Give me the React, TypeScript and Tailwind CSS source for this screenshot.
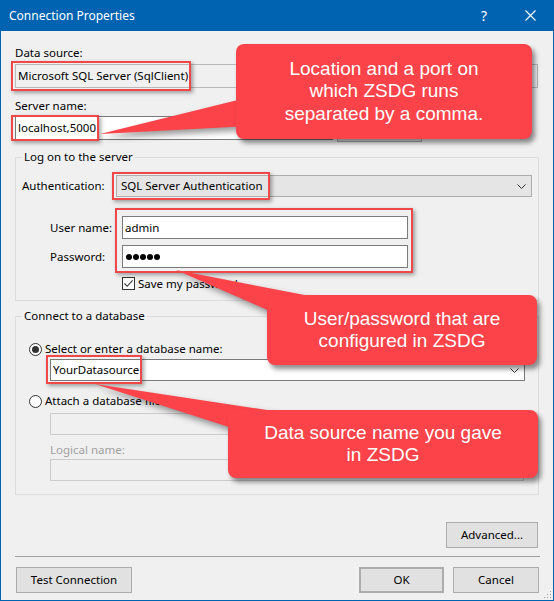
import React from 'react';

function Chevron() {
  return (
    <svg width="9" height="5" viewBox="0 0 9 5" className="shrink-0">
      <path d="M0.5 0.5 L4.5 4.5 L8.5 0.5" fill="none" stroke="#333" strokeWidth="1" />
    </svg>
  );
}

function Radio({ checked }: { checked?: boolean }) {
  return (
    <span className="w-[13px] h-[13px] rounded-full border border-[#333] bg-white flex items-center justify-center shrink-0">
      {checked && <span className="w-[7px] h-[7px] rounded-full bg-[#333]" />}
    </span>
  );
}

function Button({ children, className = '' }: { children?: React.ReactNode; className?: string }) {
  return (
    <div className={`h-[26px] flex items-center justify-center bg-[#e1e1e1] border border-[#adadad] ${className}`}>
      {children}
    </div>
  );
}

function Callout({ className, lines }: { className: string; lines: string[] }) {
  return (
    <div
      className={`absolute rounded-[8px] bg-[#fc4349] shadow-[3px_4px_5px_rgba(0,0,0,0.45)] flex flex-col items-center justify-center text-white text-[19px] leading-[22.5px] font-['Liberation_Sans',Arial,sans-serif] ${className}`}
    >
      {lines.map((l) => (
        <div key={l}>{l}</div>
      ))}
    </div>
  );
}

export default function App() {
  return (
    <div className="relative w-[554px] h-[601px] overflow-hidden bg-[#f0f0f0] border-x border-b border-[#0063b1] font-['Noto_Sans',sans-serif] text-[11.5px] leading-[16px] text-black">
      {/* title bar */}
      <div className="h-[31px] bg-[#0063b1] flex items-center text-white pl-[8px]">
        <span className="text-[12px]">Connection Properties</span>
        <div className="ml-auto flex h-full">
          <div className="w-[46px] flex items-center justify-center text-[14px]">?</div>
          <div className="w-[46px] flex items-center justify-center">
            <svg width="11" height="11" viewBox="0 0 11 11">
              <path d="M0.5 0.5 L10.5 10.5 M10.5 0.5 L0.5 10.5" stroke="white" strokeWidth="1.1" />
            </svg>
          </div>
        </div>
      </div>

      <div className="px-[14px] pt-[14px]">
        <div className="h-[16px]">Data source:</div>
        <div className="mt-[3px] h-[24px] border border-[#b9b9b9] flex items-center pl-[2px] mr-[1px]">
          Microsoft SQL Server (SqlClient)
        </div>

        <div className="mt-[10px] h-[16px]">Server name:</div>
        <div className="mt-[2px] flex h-[24px]">
          <div className="w-[318px] border border-[#7a7a7a] bg-white flex items-center pl-[2px]">localhost,5000</div>
          {/* refresh button, hidden under the callout */}
          <Button className="ml-[4px] w-[85px] h-[24px]" />
        </div>

        <fieldset className="mt-[10px] border border-[#dcdcdc] px-[6px] pb-[10px]">
          <legend className="px-[2px] leading-[14px]">Log on to the server</legend>
          <div className="mt-[11px] flex items-center h-[22px]">
            <div className="w-[94px]">Authentication:</div>
            <div className="flex-1 h-full border border-[#adadad] bg-[#e5e5e5] flex items-center pl-[4px] pr-[5px]">
              <span className="flex-1">SQL Server Authentication</span>
              <Chevron />
            </div>
          </div>
          <div className="mt-[19px] flex items-center h-[23px] pl-[28px]">
            <div className="w-[72px]">User name:</div>
            <div className="w-[286px] h-full border border-[#7a7a7a] bg-white flex items-center pl-[2px]">admin</div>
          </div>
          <div className="mt-[6px] flex items-center h-[23px] pl-[28px]">
            <div className="w-[72px]">Password:</div>
            <div className="w-[286px] h-full border border-[#7a7a7a] bg-white flex items-center gap-[1px] pl-[3px]">
              <span className="w-[6px] h-[6px] rounded-full bg-black" />
              <span className="w-[6px] h-[6px] rounded-full bg-black" />
              <span className="w-[6px] h-[6px] rounded-full bg-black" />
              <span className="w-[6px] h-[6px] rounded-full bg-black" />
              <span className="w-[6px] h-[6px] rounded-full bg-black" />
            </div>
          </div>
          <div className="mt-[9px] flex items-center h-[13px] pl-[100px]">
            <span className="w-[13px] h-[13px] border border-[#333] bg-white flex items-center justify-center">
              <svg width="11" height="11" viewBox="0 0 11 11">
                <path d="M1.5 5.5 L4.2 8.3 L9.6 2.4" fill="none" stroke="#333" strokeWidth="1.1" />
              </svg>
            </span>
            <span className="ml-[3px]">Save my password</span>
          </div>
        </fieldset>

        <fieldset className="mt-[8px] border border-[#dcdcdc] px-[6px] pb-[13px]">
          <legend className="px-[2px] leading-[14px]">Connect to a database</legend>
          <div className="mt-[18px] flex items-center h-[16px] pl-[7px]">
            <Radio checked />
            <span className="ml-[3px]">Select or enter a database name:</span>
          </div>
          <div className="mt-[2px] ml-[28px] w-[475px] h-[22px] border border-[#7a7a7a] bg-white flex items-center pl-[2px] pr-[5px]">
            <span className="flex-1">YourDatasource</span>
            <Chevron />
          </div>
          <div className="mt-[12px] flex items-center h-[16px] pl-[7px]">
            <Radio />
            <span className="ml-[3px]">Attach a database file:</span>
          </div>
          <div className="mt-[4px] ml-[28px] w-[474px] h-[22px] border border-[#cccccc]" />
          <div className="mt-[7px] ml-[28px] h-[16px] text-[#a0a0a0]">Logical name:</div>
          <div className="mt-[1px] ml-[28px] w-[474px] h-[22px] border border-[#cccccc]" />
        </fieldset>

        <div className="mt-[27px] flex justify-end pr-[1px]">
          <Button className="w-[92px] h-[25px]">Advanced...</Button>
        </div>
        <div className="mt-[8px] h-px bg-[#a0a0a0] -mr-px" />
        <div className="mt-[10px] flex">
          <Button className="ml-[1px] w-[116px]">Test Connection</Button>
          <Button className="ml-auto w-[85px] border-2 border-[#0078d7]">OK</Button>
          <Button className="ml-[9px] w-[86px]">Cancel</Button>
        </div>
      </div>

      {/* resize grip */}
      <svg className="absolute right-[1px] bottom-[1px]" width="9" height="9" viewBox="0 0 9 9">
        <rect x="7" y="1" width="1" height="1" fill="#a0a0a0" />
        <rect x="4" y="4" width="1" height="1" fill="#a0a0a0" />
        <rect x="7" y="4" width="1" height="1" fill="#a0a0a0" />
        <rect x="1" y="7" width="1" height="1" fill="#a0a0a0" />
        <rect x="4" y="7" width="1" height="1" fill="#a0a0a0" />
        <rect x="7" y="7" width="1" height="1" fill="#a0a0a0" />
      </svg>

      {/* highlight boxes */}
      <div className="absolute left-[10px] top-[61px] w-[180px] h-[30px] border-2 border-[#f04848] shadow-[2px_2px_4px_rgba(0,0,0,0.35)]" />
      <div className="absolute left-[10px] top-[115px] w-[88px] h-[26px] border-2 border-[#f04848] shadow-[2px_2px_4px_rgba(0,0,0,0.35)]" />
      <div className="absolute left-[111px] top-[172px] w-[158px] h-[28px] border-2 border-[#f04848] shadow-[2px_2px_4px_rgba(0,0,0,0.35)]" />
      <div className="absolute left-[114px] top-[208px] w-[298px] h-[65px] border-2 border-[#f04848] shadow-[2px_2px_4px_rgba(0,0,0,0.35)]" />
      <div className="absolute left-[45px] top-[355px] w-[96px] h-[29px] border-2 border-[#f04848] shadow-[2px_2px_4px_rgba(0,0,0,0.35)]" />

      {/* callout pointers */}
      <svg
        className="absolute left-[-1px] top-0 drop-shadow-[3px_4px_3px_rgba(0,0,0,0.4)]"
        width="554"
        height="601"
        viewBox="0 0 554 601"
      >
        <polygon points="100,134 250,97 250,126" fill="#fc4349" />
        <polygon points="176,270 320,298 272,312" fill="#fc4349" />
        <polygon points="95,384 280,412 232,428" fill="#fc4349" />
      </svg>

      <Callout
        className="left-[235px] top-[44px] w-[296px] h-[95px]"
        lines={['Location and a port on', 'which ZSDG runs', 'separated by a comma.']}
      />
      <Callout
        className="left-[266px] top-[295px] w-[270px] h-[70px]"
        lines={['User/password that are', 'configured in ZSDG']}
      />
      <Callout
        className="left-[227px] top-[410px] w-[310px] h-[68px]"
        lines={['Data source name you gave', 'in ZSDG']}
      />
    </div>
  );
}
